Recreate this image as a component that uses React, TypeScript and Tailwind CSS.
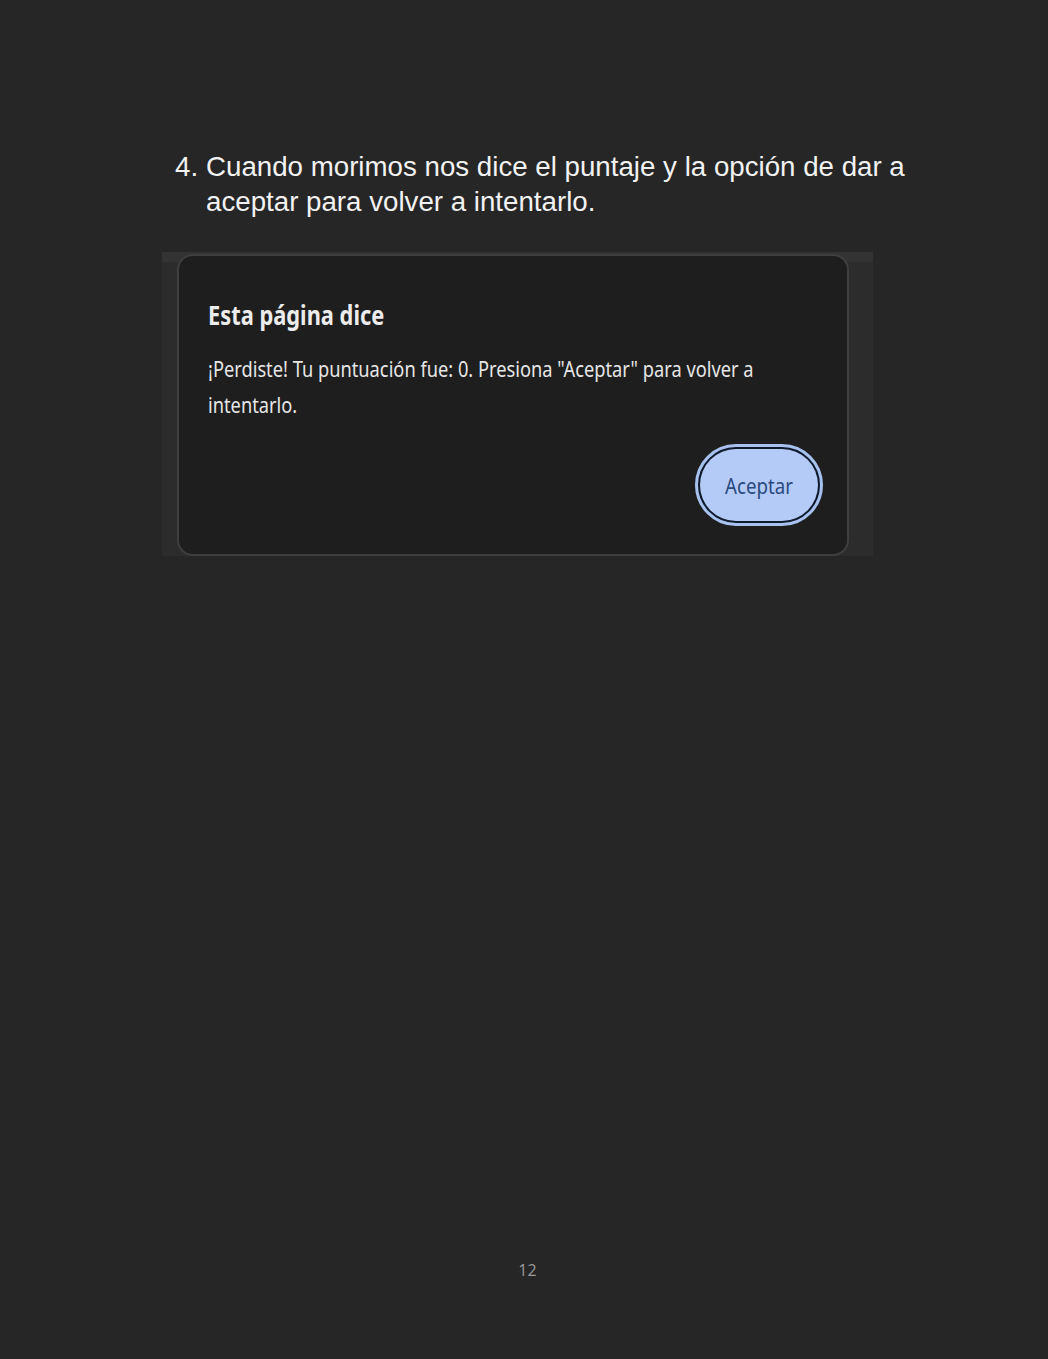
export default function App() {
  return (
    <div className="min-h-[1359px] w-full bg-[#262626] relative font-['Liberation_Sans',Arial,sans-serif]">
      <div className="pt-[149px] pl-[175px]">
        <div className="flex text-[27.7px] leading-[35px] text-[#f2f2f2]">
          <span className="w-[31px] shrink-0">4.</span>
          <p className="w-[740px]">
            Cuando morimos nos dice el puntaje y la opción de dar a aceptar para volver a intentarlo.
          </p>
        </div>
      </div>

      <div className="ml-[162px] mt-[33px] w-[711px] h-[304px] bg-[#2c2c2c] border-t-[10px] border-[#333333] relative">
        <div className="absolute left-[15px] top-[-8px] w-[672px] h-[302px] rounded-[16px] border-2 border-[#3f3f3f] bg-[#1e1e1e] font-['Noto_Sans',sans-serif] flex flex-col">
          <div className="pl-[29px] pt-[42px]">
            <h2 className="origin-left scale-x-[0.84] whitespace-nowrap text-[26px] font-bold leading-[34px] text-[#ececec]">
              Esta página dice
            </h2>
            <p className="mt-[18px] origin-left scale-x-[0.83] w-[700px] text-[22px] leading-[36px] text-[#e6e6e6]">
              ¡Perdiste! Tu puntuación fue: 0. Presiona "Aceptar" para volver a intentarlo.
            </p>
          </div>
          <div className="flex justify-end pr-[24px] mt-auto pb-[28px]">
            <div className="rounded-full border-[3px] border-[#a8c2f0] p-[2px] bg-[#0f1a2c]">
              <button className="w-[118px] h-[72px] rounded-full bg-[#b4cbf7] text-[#2b4a80] text-[22px]">
                <span className="inline-block scale-x-[0.85]">Aceptar</span>
              </button>
            </div>
          </div>
        </div>
      </div>

      <div className="absolute left-0 right-0 top-[1258px] pl-[7px] text-center text-[16px] text-[#9a9a9a] font-['Open_Sans',sans-serif]">
        12
      </div>
    </div>
  )
}
